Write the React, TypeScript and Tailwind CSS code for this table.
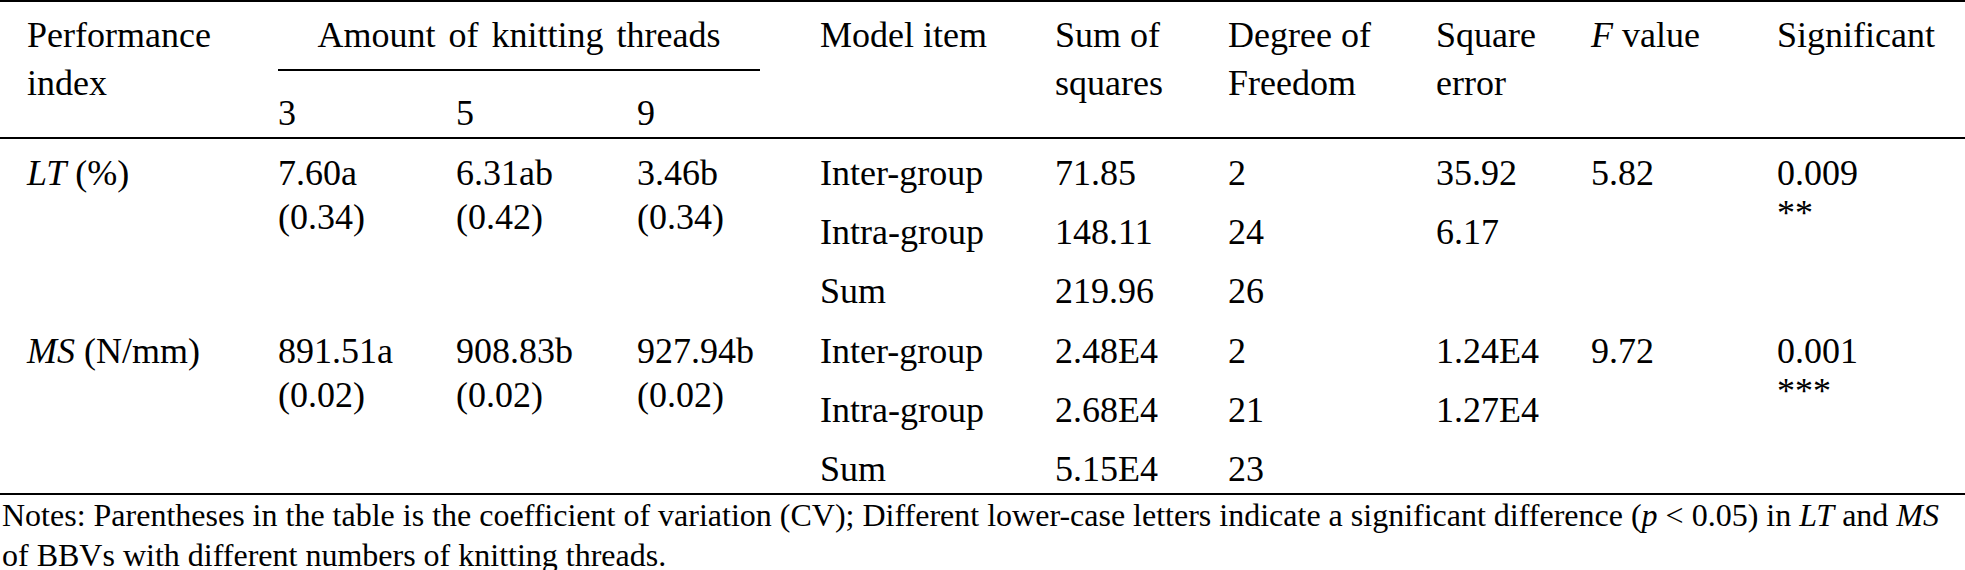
import React from "react";

const COLS =
  "grid grid-cols-[278px_178px_181px_183px_235px_173px_208px_155px_186px_1fr]";

function Rule() {
  return <div className="h-[2px] w-full bg-black" />;
}

type Group = {
  label: React.ReactNode;
  vals: [string, string][];
  model: [string, string, string, string][];
  f: string;
  sig: [string, string];
  rows: string;
};

const ROW_START = ["row-start-1", "row-start-2", "row-start-3"];

function Body({ g }: { g: Group }) {
  const two = "pt-[7px] leading-[44px] row-span-3";
  return (
    <div className={`${COLS} ${g.rows}`}>
      <div className={`${two} pl-[27px]`}>{g.label}</div>
      {g.vals.map((v, i) => (
        <div key={i} className={two}>
          {v[0]}
          <br />
          {v[1]}
        </div>
      ))}
      {g.model.map((r, i) => (
        <React.Fragment key={i}>
          <div className={`col-start-5 ${ROW_START[i]} leading-[59px]`}>{r[0]}</div>
          <div className={`col-start-6 ${ROW_START[i]} leading-[59px]`}>{r[1]}</div>
          <div className={`col-start-7 ${ROW_START[i]} leading-[59px]`}>{r[2]}</div>
          <div className={`col-start-8 ${ROW_START[i]} leading-[59px]`}>{r[3]}</div>
        </React.Fragment>
      ))}
      <div className="col-start-9 row-start-1 leading-[59px]">{g.f}</div>
      <div className="col-start-10 row-start-1 row-span-3 flex flex-col pt-[9px]">
        <div className="leading-[40px]">{g.sig[0]}</div>
        <div className="leading-[40px]">{g.sig[1]}</div>
      </div>
    </div>
  );
}

const groups: Group[] = [
  {
    label: (
      <>
        <i>LT</i> (%)
      </>
    ),
    vals: [
      ["7.60a", "(0.34)"],
      ["6.31ab", "(0.42)"],
      ["3.46b", "(0.34)"],
    ],
    model: [
      ["Inter-group", "71.85", "2", "35.92"],
      ["Intra-group", "148.11", "24", "6.17"],
      ["Sum", "219.96", "26", ""],
    ],
    f: "5.82",
    sig: ["0.009", "**"],
    rows: "grid-rows-[59px_59px_60px]",
  },
  {
    label: (
      <>
        <i>MS</i> (N/mm)
      </>
    ),
    vals: [
      ["891.51a", "(0.02)"],
      ["908.83b", "(0.02)"],
      ["927.94b", "(0.02)"],
    ],
    model: [
      ["Inter-group", "2.48E4", "2", "1.24E4"],
      ["Intra-group", "2.68E4", "21", "1.27E4"],
      ["Sum", "5.15E4", "23", ""],
    ],
    f: "9.72",
    sig: ["0.001", "***"],
    rows: "grid-rows-[59px_59px_53px]",
  },
];

export default function App() {
  return (
    <div className="w-[1965px] h-[570px] overflow-hidden bg-white text-black font-['Liberation_Serif','Times_New_Roman',serif]">
      <div className="text-[36px]">
        <Rule />
        <div className={`${COLS} h-[135px] pt-[9px] leading-[48px]`}>
          <div className="pl-[27px]">
            Performance
            <br />
            index
          </div>
          <div className="col-span-3 flex flex-col">
            <div className="w-[482px] text-center [word-spacing:4px]">
              Amount of knitting threads
            </div>
            <div className="mt-[10px] h-[2px] w-[482px] bg-black" />
            <div className="mt-[18px] grid grid-cols-[178px_181px_183px]">
              <div>3</div>
              <div>5</div>
              <div>9</div>
            </div>
          </div>
          <div>Model item</div>
          <div>
            Sum of
            <br />
            squares
          </div>
          <div>
            Degree of
            <br />
            Freedom
          </div>
          <div>
            Square
            <br />
            error
          </div>
          <div>
            <i>F</i> value
          </div>
          <div>Significant</div>
        </div>
        <Rule />
        <div className="pt-[5px]">
          {groups.map((g, i) => (
            <Body key={i} g={g} />
          ))}
        </div>
        <Rule />
      </div>
      <div className="pl-[2px] text-[32px] leading-[40px] whitespace-nowrap">
        Notes: Parentheses in the table is the coefficient of variation (CV);
        Different lower-case letters indicate a significant difference (
        <i>p</i> &lt; 0.05) in <i>LT</i> and <i>MS</i>
        <br />
        of BBVs with different numbers of knitting threads.
      </div>
    </div>
  );
}
